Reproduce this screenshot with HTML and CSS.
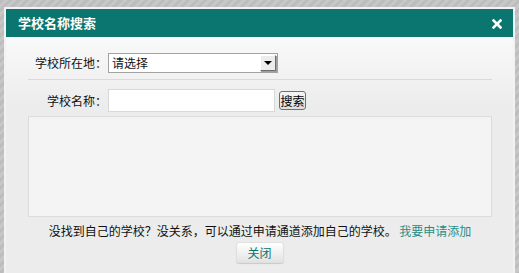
FILE: index.html
```html
<!DOCTYPE html>
<html>

<head>
	<meta charset="utf-8">
	<title>学校名称搜索</title>
	<link rel="stylesheet" href="styles.css">
</head>

<body>
	<div class="dialog">
		<div class="dialog-head">
			<h2>学校名称搜索</h2>
			<span class="close-icon" title="关闭">
				<svg width="10" height="10" viewBox="0 0 10 10">
					<path d="M1.5 1.5 L8.5 8.5 M8.5 1.5 L1.5 8.5" stroke="#fff" stroke-width="2.6" stroke-linecap="square" />
				</svg>
			</span>
		</div>

		<div class="dialog-body">
			<div class="row row-area">
				<label>学校所在地：</label>
				<div class="select">
					<span class="select-value">请选择</span>
					<span class="select-arrow"></span>
				</div>
			</div>

			<div class="row row-name">
				<label>学校名称：</label>
				<input type="text" class="name-input">
				<button class="search-btn">搜索</button>
			</div>

			<div class="result-box"></div>

			<p class="tip">没找到自己的学校？没关系，可以通过申请通道添加自己的学校。 <a href="#">我要申请添加</a></p>

			<div class="actions">
				<button class="close-btn">关闭</button>
			</div>
		</div>
	</div>
</body>

</html>
```

FILE: styles.css
```css
:root {
	--teal: #0b7570;
	--link: #2a8c86;
	--text: #111;
}

* {
	box-sizing: border-box;
}

body {
	margin: 0;
	height: 273px;
	overflow: hidden;
	background: repeating-linear-gradient(135deg, #bdbdbd 0, #bdbdbd 3px, #c7c7c7 3px, #c7c7c7 6px);
	font: 12px/16px "Noto Sans CJK SC", "DejaVu Sans", sans-serif;
	color: var(--text);
	padding: 7px 0 0 4px;
}

.dialog {
	width: 511px;
	height: 266px;
	border: 2px solid #f2f2f2;
	border-bottom: none;
	background: #ececec;
	display: flex;
	flex-direction: column;
}

.dialog-head {
	background: var(--teal);
	height: 28px;
	flex-shrink: 0;
	display: flex;
	align-items: center;
	justify-content: space-between;
	padding: 0 11px 0 12px;
}

.dialog-head h2 {
	margin: 0;
	color: #fff;
	font-size: 13px;
	font-weight: bold;
}

.close-icon {
	display: flex;
	margin-top: 2px;
	cursor: pointer;
}

.dialog-body {
	flex: 1;
	background: linear-gradient(#f9f9f9 0, #ececec 70px);
	padding: 16px 21px 0 22px;
}

.row {
	display: flex;
	align-items: center;
}

.row label {
	width: 79px;
	text-align: right;
	flex-shrink: 0;
	margin-right: 1px;
}

.row-area {
	height: 27px;
	padding-bottom: 6px;
	border-bottom: 1px solid #dadada;
}

.select {
	width: 170px;
	height: 20px;
	border: 1px solid #a3a3a3;
	background: #fff;
	display: flex;
	align-items: center;
}

.select-value {
	flex: 1;
	padding-left: 3px;
}

.select-arrow {
	width: 16px;
	height: 16px;
	margin-right: 1px;
	background: #ececec;
	border: 1px solid;
	border-color: #fff #6e6e6e #6e6e6e #fff;
	box-shadow: 1px 1px 0 #a0a0a0;
	position: relative;
}

.select-arrow::after {
	content: "";
	position: absolute;
	left: 3px;
	top: 5px;
	border-left: 4px solid transparent;
	border-right: 4px solid transparent;
	border-top: 4px solid #000;
}

.row-name {
	margin-top: 9px;
	height: 23px;
}

.name-input {
	width: 167px;
	height: 23px;
	padding: 0;
	border: 1px solid #d8d8d8;
	background: #fff;
	margin: 0;
}

.search-btn {
	margin-left: 4px;
	height: 19px;
	width: 27px;
	padding: 0;
	font: 12px/16px "Noto Sans CJK SC", sans-serif;
	color: #000;
	background: linear-gradient(#f6f6f6, #dedede);
	border: 1px solid #707070;
	border-radius: 3px;
}

.result-box {
	margin-top: 4px;
	height: 101px;
	background: #f4f4f4;
	border: 1px solid #dcdcdc;
}

.tip {
	margin: 6px 0 0;
	text-align: center;
	line-height: 16px;
}

.tip a {
	color: var(--link);
	text-decoration: none;
}

.actions {
	display: flex;
	justify-content: center;
	margin-top: 3px;
	padding-right: 1px;
}

.close-btn {
	width: 48px;
	height: 21px;
	padding: 0;
	font: 12px/16px "Noto Sans CJK SC", sans-serif;
	color: var(--teal);
	background: linear-gradient(#ffffff, #e3e3e3);
	border: 1px solid #e0e0e0;
	border-radius: 3px;
	box-shadow: 0 1px 1px rgba(0, 0, 0, 0.15);
}
```
